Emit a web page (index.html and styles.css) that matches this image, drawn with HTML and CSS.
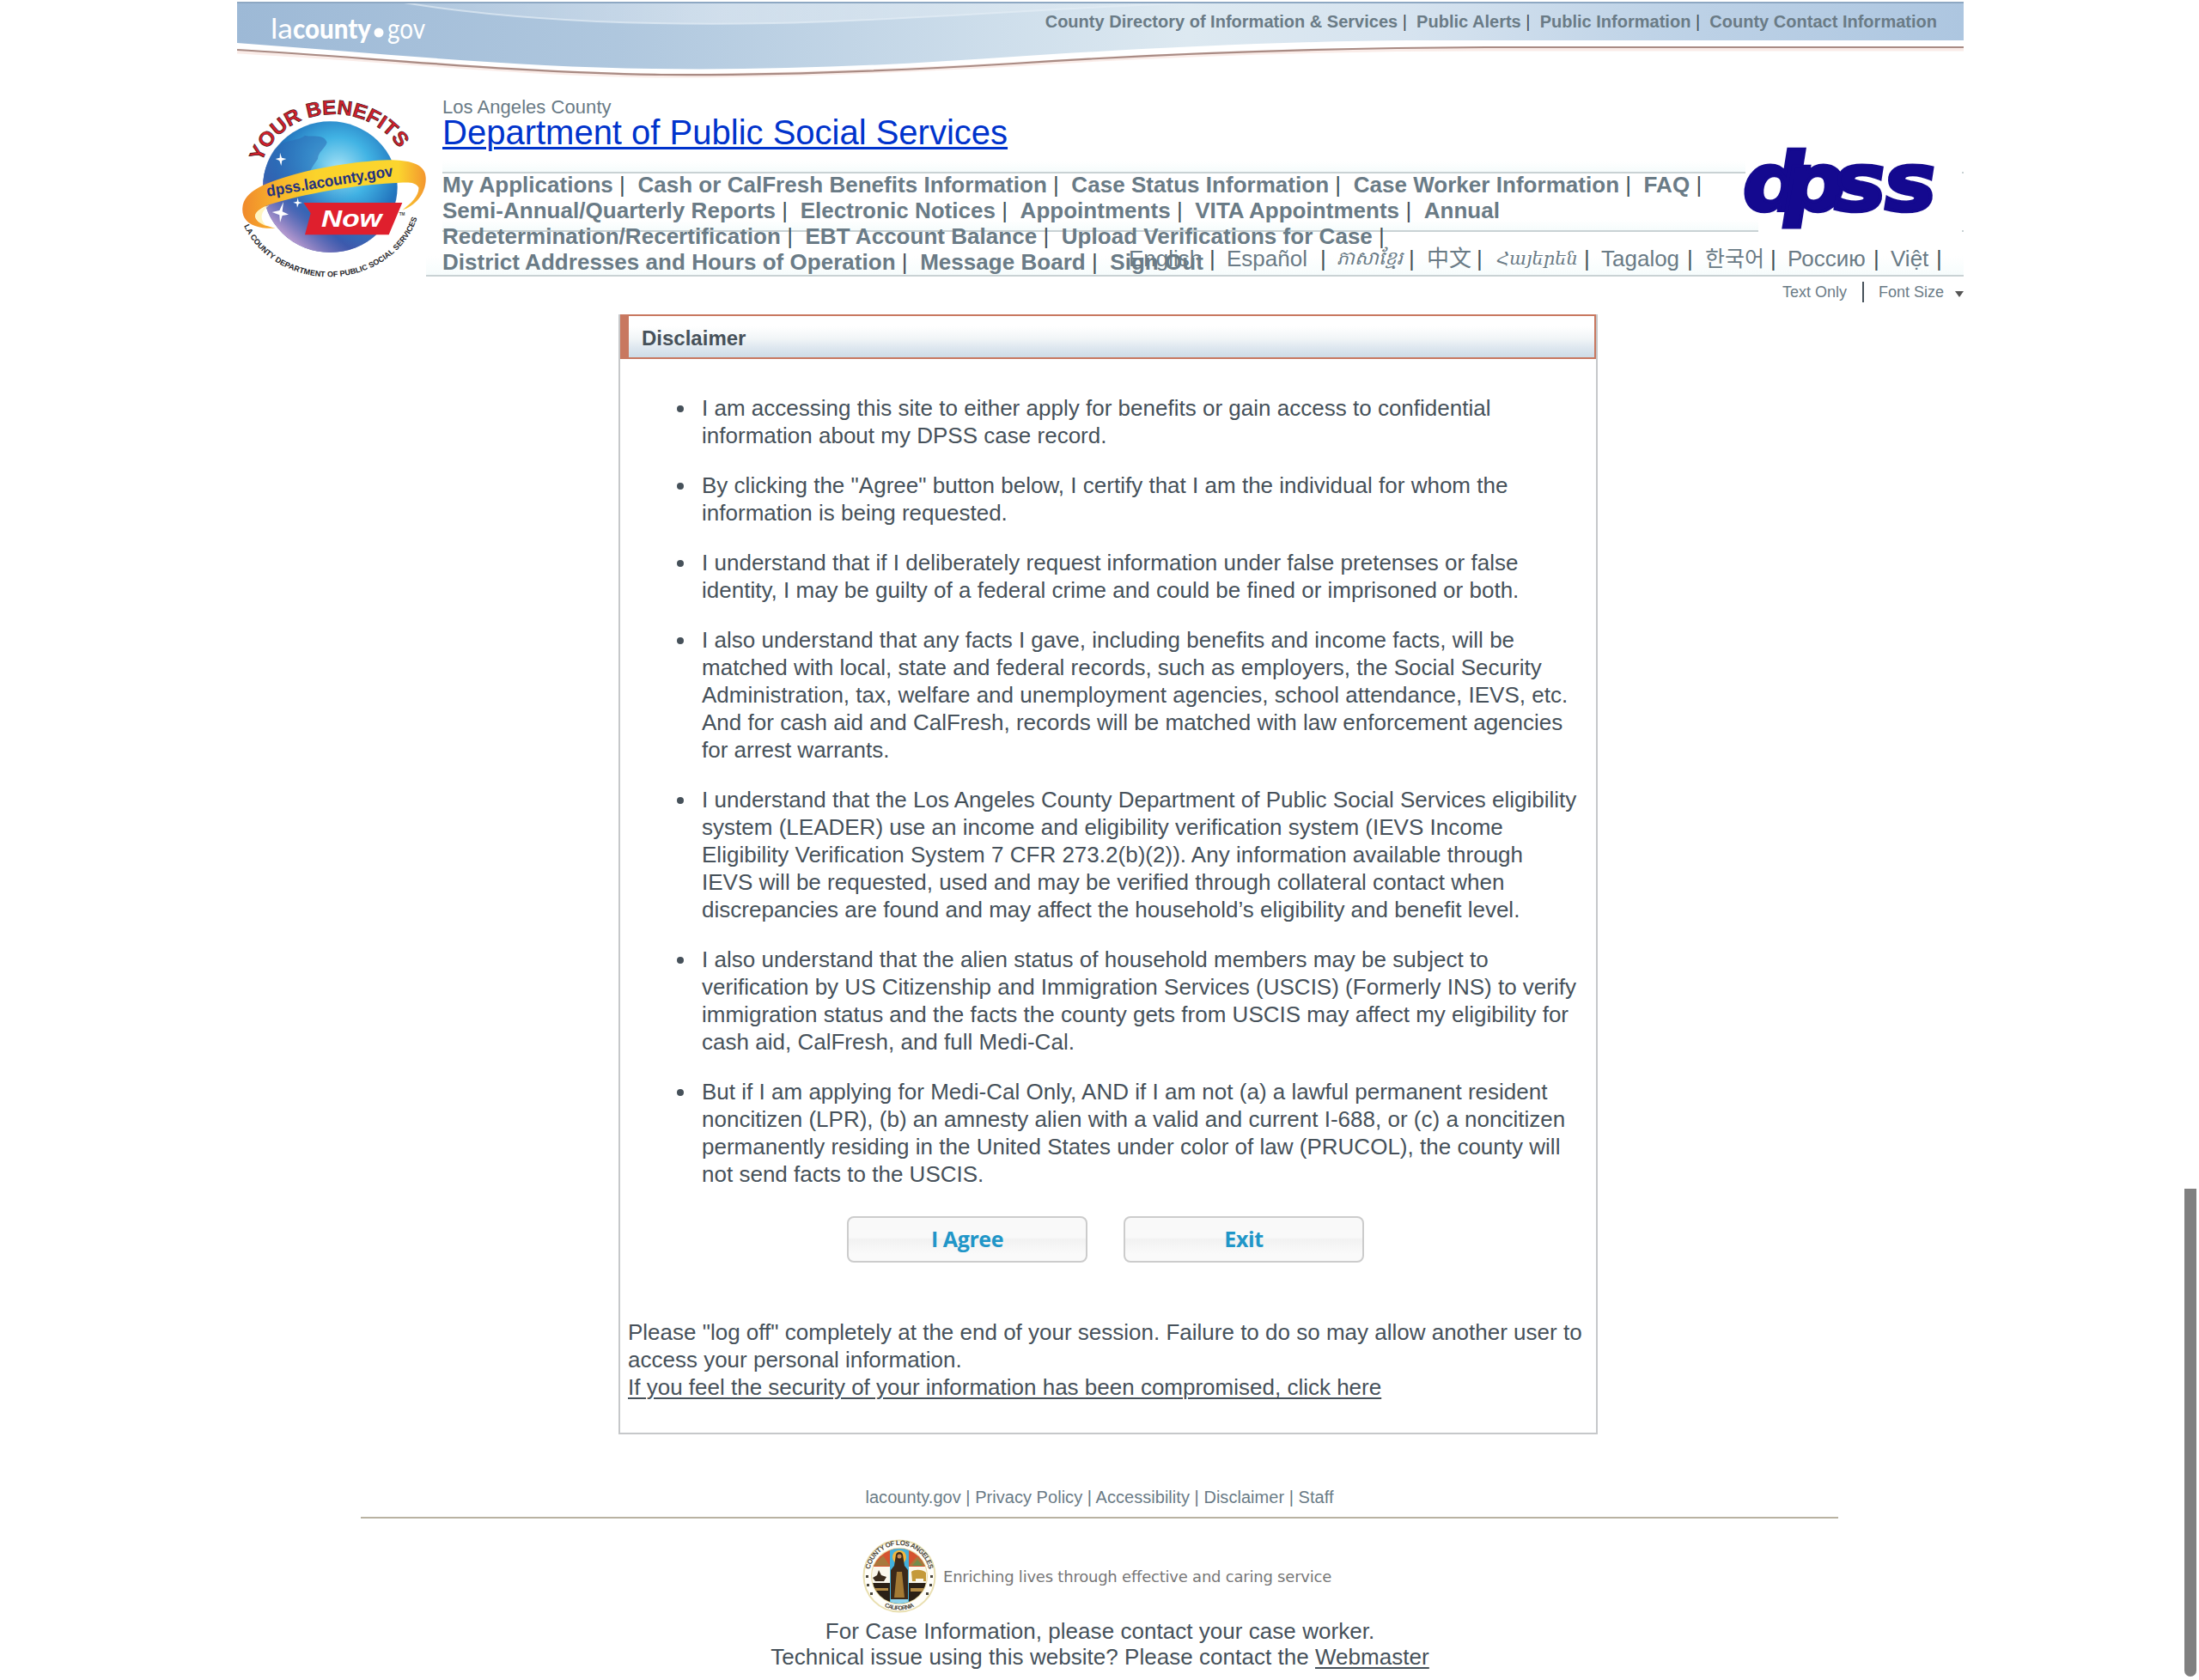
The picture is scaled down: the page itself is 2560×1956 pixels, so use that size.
FILE: index.html
```html
<!DOCTYPE html>
<html lang="en">
<head>
<meta charset="utf-8">
<title>Department of Public Social Services - Disclaimer</title>
<link rel="stylesheet" href="styles.css">
</head>
<body>
<div class="page">
  <header>
    <div class="banner">
      <svg class="banner-art" width="2010" height="105" viewBox="276 0 2010 105" aria-hidden="true">
        <defs>
          <linearGradient id="sky" x1="0" x2="1" y1="0" y2="0">
            <stop offset="0" stop-color="#9db9d6"/><stop offset=".22" stop-color="#afc7de"/>
            <stop offset=".42" stop-color="#cbdcea"/><stop offset=".55" stop-color="#dde9f1"/>
            <stop offset=".68" stop-color="#d6e3ef"/><stop offset=".82" stop-color="#bfd3e7"/>
            <stop offset="1" stop-color="#adc6e0"/>
          </linearGradient>
          <linearGradient id="shine" x1="0" x2="1" y1="0" y2="0">
            <stop offset="0" stop-color="#fff" stop-opacity=".1"/><stop offset=".4" stop-color="#fff" stop-opacity=".35"/>
            <stop offset="1" stop-color="#fff" stop-opacity=".05"/>
          </linearGradient>
        </defs>
        <path fill="url(#sky)" d="M276 2H2286V47H1640C1500 48 1330 56 1180 66C1040 76 900 82 760 80C600 78 440 62 276 50Z"/>
        <path fill="url(#shine)" d="M470 2C600 24 740 30 900 27C1060 24 1240 8 1400 3Z"/>
        <path fill="none" stroke="#e3edf5" stroke-width="2" opacity=".7" d="M470 3C600 24 740 30 900 27C1060 24 1240 8 1400 3"/>
        <path fill="#8ea8c3" d="M276 2H2286V4H276Z"/>
        <path fill="none" stroke="#f6dfd8" stroke-width="5" opacity=".6" d="M276 60C420 67 600 86 770 88C900 89 1050 82 1180 75C1360 63 1540 57 1730 57H2286"/>
        <path fill="none" stroke="#a98b84" stroke-width="2.2" d="M276 58C420 66 600 85 770 87C900 88 1050 82 1180 74C1360 62 1540 56 1730 55H2286"/>
        <g class="county-logo">
          <text x="315" y="45" textLength="26" lengthAdjust="spacingAndGlyphs">la</text>
          <text class="strong" x="341" y="45" textLength="91" lengthAdjust="spacingAndGlyphs">county</text>
          <circle cx="441" cy="38" r="5.5"/>
          <text x="451" y="45" textLength="44" lengthAdjust="spacingAndGlyphs">gov</text>
        </g>
      </svg>
      <nav class="county-links"><a>County Directory of Information &amp; Services</a><i> |&nbsp; </i><a>Public Alerts</a><i> |&nbsp; </i><a>Public Information</a><i> |&nbsp; </i><a>County Contact Information</a></nav>
    </div>

    <div class="masthead">
      <svg class="rules" width="1790" height="150" viewBox="496 180 1790 150" aria-hidden="true">
        <defs>
          <linearGradient id="mist" x1="0" x2="0" y1="0" y2="1"><stop offset="0" stop-color="#fff"/><stop offset="1" stop-color="#f6fcfc"/></linearGradient>
        </defs>
        <path fill="url(#mist)" d="M515 188H2032V200H515Z"/>
        <path fill="url(#mist)" d="M515 256H2047V268H515Z"/>
        <path fill="url(#mist)" d="M496 298H2286V320H496Z"/>
        <path fill="#c9d2d4" d="M515 200H2032V202H515ZM2284 200H2286V202H2284ZM515 268H2047V270H515ZM2284 268H2286V270H2284ZM496 320H2286V322H496Z"/>
      </svg>
      <svg class="badge" width="240" height="230" viewBox="0 0 720 690" role="img" aria-label="Your Benefits Now">
        <defs>
          <radialGradient id="globe" cx=".56" cy=".36" r=".68">
            <stop offset="0" stop-color="#a6e2f5"/><stop offset=".35" stop-color="#41b3e4"/>
            <stop offset=".68" stop-color="#2274bd"/><stop offset="1" stop-color="#5060ad"/>
          </radialGradient>
          <linearGradient id="dusk" x1=".15" y1=".85" x2=".55" y2=".4">
            <stop offset="0" stop-color="#b99bd0" stop-opacity=".95"/><stop offset=".4" stop-color="#3d4fa8" stop-opacity=".6"/><stop offset="1" stop-color="#2d7fc6" stop-opacity="0"/>
          </linearGradient>
          <linearGradient id="ribbon" x1="0" x2="1" y1="0" y2="0">
            <stop offset="0" stop-color="#f08a2c"/><stop offset=".2" stop-color="#f9b52b"/><stop offset=".4" stop-color="#fbd32b"/>
            <stop offset=".85" stop-color="#fbd52e"/><stop offset="1" stop-color="#f3962f"/>
          </linearGradient>
          <path id="arc-top" d="M104 252A262 236 0 0 1 606 252"/>
          <path id="arc-bottom" d="M42 474A322 290 0 0 0 650 437"/>
        </defs>
        <ellipse cx="343" cy="338" rx="235" ry="229" fill="url(#globe)"/>
        <ellipse cx="343" cy="338" rx="235" ry="229" fill="url(#dusk)"/>
        <path fill="#2e69b4" opacity=".55" d="M150 205C180 170 230 180 255 158C280 165 320 150 332 182C325 205 300 215 300 240C285 262 275 275 270 290L110 320C112 280 125 240 150 205Z"/>
        <path fill="#fff" d="M168 218L174 236L190 240L175 246L172 264L166 246L152 240L167 236ZM180 390L176 424L198 434L176 438L168 462L166 436L140 426L166 420ZM230 376L233 390L246 393L233 397L228 410L226 397L214 392L227 389Z"/>
        <path fill="url(#ribbon)" d="M37 410C42 355 110 322 250 286C350 262 480 244 560 244C630 246 676 262 677 305C680 360 640 405 595 419C628 395 655 365 652 340C640 318 610 322 560 325C430 332 250 362 130 400C90 416 78 432 82 445C88 464 118 474 152 482C90 486 32 468 37 410Z"/>
        <path fill="#fff3b0" opacity=".8" d="M82 440C80 425 100 412 130 402C100 425 95 450 120 474C98 466 86 456 82 440Z"/>
        <path fill="#df1f2d" d="M250 393H595L548 505H255L275 430Z"/>
        <text class="badge-now" x="312" y="478" textLength="212" lengthAdjust="spacingAndGlyphs">Now</text>
        <text class="badge-url" transform="translate(124 371) rotate(-9.2)" textLength="446" lengthAdjust="spacingAndGlyphs">dpss.lacounty.gov</text>
        <text class="badge-arc"><textPath href="#arc-top" textLength="592" lengthAdjust="spacingAndGlyphs">YOUR BENEFITS</textPath></text>
        <text class="badge-dept"><textPath href="#arc-bottom" textLength="760" lengthAdjust="spacingAndGlyphs">LA COUNTY DEPARTMENT OF PUBLIC SOCIAL SERVICES</textPath></text>
        <text class="badge-tm" x="584" y="437">TM</text>
      </svg>

      <div class="titles">
        <p class="county">Los Angeles County</p>
        <h1><a>Department of Public Social Services</a></h1>
        <nav class="main-nav">
          <div><a>My Applications</a><i> |&nbsp; </i><a>Cash or CalFresh Benefits Information</a><i> |&nbsp; </i><a>Case Status Information</a><i> |&nbsp; </i><a>Case Worker Information</a><i> |&nbsp; </i><a>FAQ</a><i> |</i></div>
          <div><a>Semi-Annual/Quarterly Reports</a><i> |&nbsp; </i><a>Electronic Notices</a><i> |&nbsp; </i><a>Appointments</a><i> |&nbsp; </i><a>VITA Appointments</a><i> |&nbsp; </i><a>Annual</a></div>
          <div><a>Redetermination/Recertification</a><i> |&nbsp; </i><a>EBT Account Balance</a><i> |&nbsp; </i><a>Upload Verifications for Case</a><i> |</i></div>
          <div><a>District Addresses and Hours of Operation</a><i> |&nbsp; </i><a>Message Board</a><i> |&nbsp; </i><a>Sign Out</a></div>
        </nav>
      </div>

      <svg class="dpss-logo" width="240" height="110" viewBox="2028 158 240 110" role="img" aria-label="dpss">
        <text transform="translate(2030 245) skewX(3) scale(1.09 1)" x="0 43 97 151">dpss</text>
      </svg>

      <nav class="languages">
        <a>English</a><i>|</i><a>Español</a><i>|</i><a class="khmer">ភាសាខ្មែរ</a><i>|</i><a>中文</a><i>|</i><a class="armenian">Հայերեն</a><i>|</i><a>Tagalog</a><i>|</i><a class="korean">한국어</a><i>|</i><a>Россию</a><i>|</i><a>Việt</a><i>|</i>
      </nav>
    </div>

    <div class="tools"><a>Text Only</a><span class="bar"></span><a>Font Size</a><span class="caret"></span></div>
  </header>

  <main class="panel">
    <h2>Disclaimer</h2>
    <ul>
      <li>I am accessing this site to either apply for benefits or gain access to confidential<br>information about my DPSS case record.</li>
      <li>By clicking the "Agree" button below, I certify that I am the individual for whom the<br>information is being requested.</li>
      <li>I understand that if I deliberately request information under false pretenses or false<br>identity, I may be guilty of a federal crime and could be fined or imprisoned or both.</li>
      <li>I also understand that any facts I gave, including benefits and income facts, will be<br>matched with local, state and federal records, such as employers, the Social Security<br>Administration, tax, welfare and unemployment agencies, school attendance, IEVS, etc.<br>And for cash aid and CalFresh, records will be matched with law enforcement agencies<br>for arrest warrants.</li>
      <li>I understand that the Los Angeles County Department of Public Social Services eligibility<br>system (LEADER) use an income and eligibility verification system (IEVS Income<br>Eligibility Verification System 7 CFR 273.2(b)(2)). Any information available through<br>IEVS will be requested, used and may be verified through collateral contact when<br>discrepancies are found and may affect the household’s eligibility and benefit level.</li>
      <li>I also understand that the alien status of household members may be subject to<br>verification by US Citizenship and Immigration Services (USCIS) (Formerly INS) to verify<br>immigration status and the facts the county gets from USCIS may affect my eligibility for<br>cash aid, CalFresh, and full Medi-Cal.</li>
      <li>But if I am applying for Medi-Cal Only, AND if I am not (a) a lawful permanent resident<br>noncitizen (LPR), (b) an amnesty alien with a valid and current I-688, or (c) a noncitizen<br>permanently residing in the United States under color of law (PRUCOL), the county will<br>not send facts to the USCIS.</li>
    </ul>
    <div class="actions"><button>I Agree</button><button>Exit</button></div>
    <p class="logoff">Please "log off" completely at the end of your session. Failure to do so may allow another user to<br>access your personal information.<br><a>If you feel the security of your information has been compromised, click here</a></p>
  </main>

  <footer>
    <nav class="foot-links">lacounty.gov | Privacy Policy | Accessibility | Disclaimer | Staff</nav>
    <div class="motto">
      <svg class="seal" width="86" height="86" viewBox="0 0 86 86" role="img" aria-label="County of Los Angeles seal">
        <defs>
          <clipPath id="disc"><circle cx="43" cy="43" r="32"/></clipPath>
          <path id="seal-top" d="M8 42A35 35 0 0 1 78 42"/>
          <path id="seal-bottom" d="M14 70A40 40 0 0 0 72 70"/>
        </defs>
        <circle cx="43" cy="43" r="41.500" fill="#fffefa" stroke="#e9dfb0" stroke-width="2"/>
        <circle cx="43" cy="43" r="33" fill="#e8d9a0"/>
        <g clip-path="url(#disc)">
          <path fill="#d5532f" d="M0 0H86V32H0Z"/>
          <path fill="#fbf7ec" d="M0 32H86V51H0Z"/>
          <path fill="#2b2016" d="M0 51H86V86H0Z"/>
          <path fill="#a8783c" d="M12 31L24 19L32 31ZM54 31L64 20L74 31Z"/>
          <path fill="#6f8d4c" d="M58 31L64 24L70 31Z"/>
          <path fill="#3b2c1e" d="M12 45L17 42L19 36L22 42L28 44L25 49H15Z"/>
          <path fill="#c59a3a" d="M57 38C60 35 70 35 74 39V49H71V46H62V49H58Z"/>
          <path fill="#b48b45" d="M12 57H30V60H12ZM56 57H76V64L70 61H56Z"/>
          <path fill="#43b1dc" d="M32 0H54V86H32Z"/>
          <circle cx="43" cy="21" r="8" fill="#f3b63c"/>
          <path fill="#3c2a1a" d="M39 18C40 14 46 14 47 18L49 31L53 36V70H33V36L37 31Z"/>
          <path fill="#a37a34" d="M40 38H46L49 68H37Z"/>
          <circle cx="43" cy="20" r="2.500" fill="#c98e58"/>
          <path fill="#8fd3ec" d="M33 70H53V78H33Z"/>
        </g>
        <text><textPath href="#seal-top" startOffset="50%" textLength="96">COUNTY OF LOS ANGELES</textPath></text>
        <text class="small"><textPath href="#seal-bottom" startOffset="50%" textLength="36">CALIFORNIA</textPath></text>
        <path fill="#4a463c" d="M4 42h3v3h-3ZM79 42h3v3h-3ZM5 52h3v3h-3ZM78 52h3v3h-3ZM9 62h3v3h-3ZM74 62h3v3h-3Z"/>
      </svg>
      <span>Enriching lives through effective and caring service</span>
    </div>
    <p class="contact">For Case Information, please contact your case worker.<br>Technical issue using this website? Please contact the <a>Webmaster</a></p>
  </footer>
</div>
<div class="scroll-thumb"></div>
</body>
</html>
```
FILE: styles.css
```css
* { box-sizing: border-box; }
html, body { margin: 0; padding: 0; overflow: hidden; }
body {
  height: 1956px;
  background: #fff;
  color: #46515a;
  font: 26px/32px "Liberation Sans", Arial, "Noto Sans CJK SC", sans-serif;
}
h1, h2, p, ul { margin: 0; padding: 0; }
i { font-style: normal; }
.page { width: 2010px; margin-left: 276px; }

.banner { position: relative; height: 105px; }
.banner-art { position: absolute; left: 0; top: 0; }
.county-logo { fill: #fff; font: 400 33px Lato, sans-serif; }
.county-logo .strong { font-weight: 900; }
.county-links {
  position: relative;
  padding: 13px 31px 0 0;
  text-align: right;
  font-size: 20px;
  line-height: 24px;
  letter-spacing: .01px;
  color: #46515a;
  white-space: pre;
}
.county-links a, .main-nav a { font-weight: bold; color: #6a7b86; }

.masthead {
  position: relative;
  display: grid;
  grid-template-columns: 239px 1fr;
  height: 217px;
}
.badge { margin-left: -6px; position: relative; }
.rules { position: absolute; right: 0; top: 75px; }
.badge-now { font: italic bold 84px "Liberation Sans", Arial, sans-serif; fill: #fff; }
.badge-url { font: bold 54px "Liberation Sans", Arial, sans-serif; fill: #22307f; }
.badge-arc {
  font: bold 70px "Liberation Sans", Arial, sans-serif;
  fill: #d4202c;
  stroke: #3a1216;
  stroke-width: 2px;
}
.badge-dept { font: bold 27px "Liberation Sans", Arial, sans-serif; fill: #26262a; }
.badge-tm { font: bold 14px "Liberation Sans", Arial, sans-serif; fill: #444; }

.titles { position: relative; padding-top: 10px; white-space: nowrap; }
.county { font-size: 22px; line-height: 20px; letter-spacing: .05px; color: #6a7b86; }
h1 { margin-top: -1px; font-size: 40px; font-weight: normal; line-height: 40px; color: #03c; }
h1 a, .logoff a, .contact a { text-decoration: underline; }
h1 a { text-decoration-thickness: 3px; text-underline-offset: 3px; }
.main-nav { margin-top: 26px; line-height: 30px; letter-spacing: .03px; }
.main-nav div { height: 30px; white-space: pre; }

.dpss-logo { position: absolute; left: 1752px; top: 53px; overflow: visible; }
.dpss-logo text {
  font: italic bold 94px "DejaVu Sans", sans-serif;
  fill: #14098f;
  stroke: #14098f;
  stroke-width: 4px;
}

.languages {
  position: absolute;
  left: 1038px;
  top: 181px;
  display: grid;
  grid-template-columns: 94px 20px 109px 19px 84px 21px 58px 23px 102px 20px 100px 21px 76px 20px 100px 20px 53px 10px;
  line-height: 30px;
  color: #6a7b86;
  white-space: nowrap;
}
.languages i { color: #46515a; }
.languages .khmer { font-size: 22px; font-style: italic; }
.languages .armenian { font-family: "DejaVu Serif", serif; font-size: 21px; font-style: italic; }
.languages .korean { font-size: 25px; }

.tools {
  display: flex;
  align-items: center;
  justify-content: flex-end;
  height: 44px;
  padding-bottom: 8px;
  font-size: 18px;
  line-height: 22px;
  color: #6a7b86;
}
.bar { width: 2px; height: 24px; margin: 0 17px 0 18px; background: #46515a; }
.caret { margin: 4px 0 0 13px; border: 5px solid transparent; border-top: 7px solid #555; border-bottom: 0; }

.panel {
  width: 1140px;
  height: 1304px;
  margin-left: 444px;
  border: 2px solid #c6c8ca;
  border-top: 0;
  white-space: nowrap;
}
.panel h2 {
  height: 52px;
  padding-left: 15px;
  border: 2px solid #c87860;
  border-left-width: 10px;
  background: linear-gradient(#fff 25%, #f1f5f7 55%, #dfe8f0 75%, #cddce6);
  font-size: 24px;
  line-height: 51px;
}
.panel ul { margin: 41px 0 0 95px; list-style: none; letter-spacing: .01px; }
.panel li { position: relative; }
.panel li + li { margin-top: 26px; }
.panel li::before {
  content: "";
  position: absolute;
  left: -29px;
  top: 13px;
  width: 8px;
  height: 8px;
  border-radius: 50%;
  background: #46515a;
}
.actions { display: flex; gap: 42px; margin: 33px 0 0 264px; }
.actions button {
  width: 280px;
  height: 54px;
  padding: 0 0 2px;
  border: 2px solid #ccc;
  border-radius: 8px;
  background: linear-gradient(#f9f9f9 45%, #f2f2f2 50%, #fafafa 85%);
  color: #2196c8;
  font: bold 25px/46px "Open Sans", "Noto Sans", sans-serif;
  letter-spacing: -.4px;
}
.logoff { margin: 65px 0 0 9px; }
.logoff a, .contact a { text-decoration-thickness: 2px; text-underline-offset: 3px; }

.foot-links {
  width: 1720px;
  height: 37px;
  margin: 61px 0 0 144px;
  border-bottom: 2px solid #b9b2a2;
  text-align: center;
  font-size: 20px;
  line-height: 24px;
  letter-spacing: .04px;
  color: #6a7b86;
}
.motto { display: flex; align-items: center; margin: 24px 0 0 728px; height: 86px; }
.motto span { margin: 2px 0 0 8px; font: 18px/24px "DejaVu Sans", sans-serif; letter-spacing: -.22px; color: #777; white-space: nowrap; }
.seal text { font: bold 8px "Liberation Sans", Arial, sans-serif; fill: #4a463c; text-anchor: middle; }
.seal .small { font-size: 7px; }
.contact { margin: 6px 0 0 -1px; text-align: center; line-height: 30px; letter-spacing: .04px; }

.scroll-thumb {
  position: absolute;
  left: 2543px;
  top: 1384px;
  width: 14px;
  height: 568px;
  border-radius: 0 0 7px 7px;
  background: gray;
}
```
